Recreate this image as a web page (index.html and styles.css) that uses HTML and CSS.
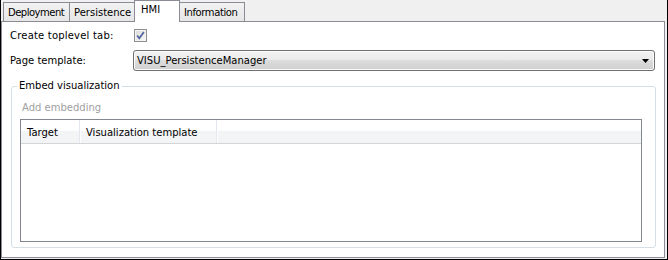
FILE: index.html
```html
<!DOCTYPE html>
<html>
<head>
<meta charset="utf-8">
<link rel="stylesheet" href="styles.css">
</head>
<body>
<div class="window">
  <div class="tabstrip">
    <div class="tab tab-deploy">Deployment</div>
    <div class="tab tab-persist">Persistence</div>
    <div class="tab tab-hmi selected">HMI</div>
    <div class="tab tab-info">Information</div>
  </div>
  <div class="pane">
    <div class="form">
      <div class="label label-wide">Create toplevel tab:</div>
      <div class="ctrl">
        <span class="checkbox">
          <svg width="13" height="13" viewBox="0 0 13 13">
            <defs>
              <linearGradient id="cbg" x1="0" y1="0" x2="1" y2="1">
                <stop offset="0" stop-color="#dcdcdc"/>
                <stop offset="1" stop-color="#f6f6f6"/>
              </linearGradient>
            </defs>
            <rect x="0.5" y="0.5" width="12" height="12" fill="#f4f4f4" stroke="#8f8f8f"/>
            <rect x="2" y="2" width="9" height="9" fill="url(#cbg)"/>
            <path d="M3.2 6.4 L5.3 9.3 L9.9 2.9" fill="none" stroke="#4f64a0" stroke-width="1.7"/>
          </svg>
        </span>
      </div>
      <div class="label">Page template:</div>
      <div class="ctrl">
        <div class="combo">
          <span class="combo-text">VISU_PersistenceManager</span>
          <svg class="combo-arrow" width="7" height="4" viewBox="0 0 7 4"><path d="M0 0 H7 L3.5 4 Z" fill="#000"/></svg>
        </div>
      </div>
    </div>
    <div class="group">
      <div class="legend">Embed visualization</div>
      <div class="add">Add embedding</div>
      <div class="table">
        <div class="thead">
          <div class="th th-target">Target</div>
          <div class="th th-vis">Visualization template</div>
          <div class="th th-rest"></div>
        </div>
        <div class="tbody"></div>
      </div>
    </div>
  </div>
</div>
</body>
</html>
```

FILE: styles.css
```css
* { box-sizing: border-box; }
html, body { margin: 0; padding: 0; }
body {
  width: 668px;
  height: 260px;
  overflow: hidden;
  font-family: "DejaVu Sans", Verdana, sans-serif;
  font-size: 10px;
  color: #000;
}
.window {
  width: 668px;
  height: 260px;
  background: #f0f0f0;
  border: 1px solid #000;
  border-top: none;
  display: flex;
  flex-direction: column;
}
.tabstrip {
  height: 21px;
  display: flex;
  align-items: flex-end;
  padding-left: 2px;
  position: relative;
  z-index: 2;
}
.tab {
  height: 19px;
  border: 1px solid #898c95;
  border-bottom: none;
  background: linear-gradient(#f2f2f2, #e6e6e6);
  padding: 4px 0 0 4px;
  margin-right: -1px;
  white-space: nowrap;
  overflow: hidden;
}
.tab-deploy { width: 67px; letter-spacing: -0.5px; }
.tab-persist { width: 67px; }
.tab-info { width: 67px; margin-left: -1px; padding-left: 5px; letter-spacing: -0.4px; }
.tab.selected {
  height: 22px;
  margin-bottom: -1px;
  margin-left: -1px;
  width: 46px;
  background: #fff;
  padding: 3px 0 0 6px;
  position: relative;
  z-index: 3;
}
.pane {
  width: 664px;
  height: 237px;
  background: #fff;
  border: 1px solid #898c95;
  display: flex;
  flex-direction: column;
}
.form {
  display: grid;
  grid-template-columns: 123px 522px;
  grid-template-rows: 15px 21px;
  row-gap: 7px;
  margin: 6px 0 0 8px;
}
.label {
  display: flex;
  align-items: center;
}
.label-wide { letter-spacing: 0.2px; }
.ctrl { display: flex; align-items: center; }
.checkbox { display: block; width: 13px; height: 13px; margin-left: 1px; }
.checkbox svg { display: block; }
.combo {
  width: 523px;
  height: 21px;
  border: 1px solid #707070;
  border-radius: 3px;
  background: linear-gradient(#f2f2f2 0%, #ebebeb 45%, #dddddd 50%, #cfcfcf 100%);
  box-shadow: inset 0 0 0 1px #fcfcfc;
  display: flex;
  align-items: center;
  padding: 0 5px 0 3px;
}
.combo-text { flex: 1; }
.combo-arrow { display: block; }
.group {
  position: relative;
  margin: 15px 8px 0 9px;
  height: 162px;
  border: 1px solid #d5dfe5;
  border-radius: 3px;
  display: flex;
  flex-direction: column;
}
.legend {
  position: absolute;
  top: -8px;
  left: 5px;
  padding: 0 2px;
  background: #fff;
  line-height: 14px;
}
.add {
  color: #a0a0a0;
  line-height: 13px;
  height: 13px;
  margin: 14px 0 0 10px;
}
.table {
  margin: 5px 13px 0 8px;
  height: 123px;
  border: 1px solid #828790;
  display: flex;
  flex-direction: column;
}
.thead {
  height: 24px;
  display: flex;
  border-bottom: 1px solid #d5d5d5;
  background: linear-gradient(#ffffff 0%, #ffffff 45%, #f3f4f6 50%, #f3f4f6 100%);
}
.th {
  height: 23px;
  line-height: 23px;
  padding: 1px 0 0 6px;
  border-right: 1px solid #e3e8ee;
  box-shadow: 1px 0 0 #ffffff;
}
.th-target { width: 59px; }
.th-vis { width: 137px; }
.th-rest { flex: 1; border-right: none; box-shadow: none; }
.tbody { flex: 1; }
```
